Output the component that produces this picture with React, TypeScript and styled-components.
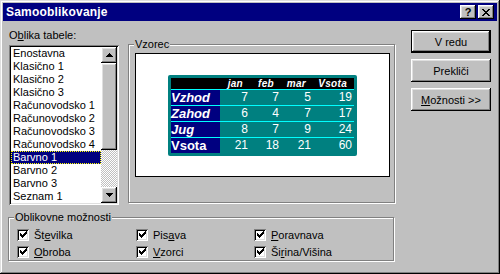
import React from "react";
import styled, { createGlobalStyle } from "styled-components";

const Global = createGlobalStyle`
  html, body { margin: 0; padding: 0; background: #c0c0c0; }
  * { box-sizing: border-box; }
`;

const raised = `
  box-shadow: inset -1px -1px #000, inset 1px 1px #fff, inset -2px -2px #808080, inset 2px 2px #dfdfdf;
`;
const sunken = `
  box-shadow: inset 1px 1px #808080, inset -1px -1px #fff, inset 2px 2px #000, inset -2px -2px #dfdfdf;
`;

const Window = styled.div`
  width: 500px;
  height: 274px;
  padding: 3px;
  background: #c0c0c0;
  box-shadow: inset -1px -1px #000, inset 1px 1px #dfdfdf, inset -2px -2px #808080, inset 2px 2px #fff;
  font-family: "Liberation Sans", Arial, sans-serif;
  font-size: 11px;
  color: #000;
  display: flex;
  flex-direction: column;
`;

const TitleBar = styled.div`
  height: 18px;
  background: #000080;
  display: flex;
  align-items: center;
  justify-content: space-between;
  padding: 0 3px 0 3px;
`;

const Title = styled.span`
  color: #fff;
  font-weight: bold;
  font-size: 12px;
  letter-spacing: 0.2px;
`;

const TitleButtons = styled.div`
  display: flex;
  gap: 2px;
`;

const TitleBtn = styled.div`
  width: 16px;
  height: 14px;
  background: #c0c0c0;
  ${raised}
  display: flex;
  align-items: center;
  justify-content: center;
  font-weight: bold;
  font-size: 11px;
  line-height: 14px;
`;

const Body = styled.div`
  flex: 1;
  padding: 8px 0 0 5px;
  display: flex;
  flex-direction: column;
`;

const TopRow = styled.div`
  display: flex;
  align-items: flex-start;
`;

const LeftCol = styled.div`
  width: 110px;
  margin-left: 1px;
  display: flex;
  flex-direction: column;
`;

const FieldLabel = styled.div`
  line-height: 13px;
  height: 16px;
`;

const Mn = styled.span`
  text-decoration: underline;
`;

const ListBox = styled.div`
  width: 110px;
  height: 160px;
  padding: 2px;
  background: #fff;
  ${sunken}
  display: flex;
`;

const ListItems = styled.div`
  flex: 1;
  display: flex;
  flex-direction: column;
`;

const ListItem = styled.div<{ $selected?: boolean }>`
  height: 13px;
  line-height: 13px;
  padding-left: 2px;
  white-space: nowrap;
  background: ${(p) => (p.$selected ? "#000080" : "transparent")};
  color: ${(p) => (p.$selected ? "#fff" : "#000")};
  outline: ${(p) => (p.$selected ? "1px dotted #ffff00" : "none")};
  outline-offset: -1px;
`;

const ScrollBar = styled.div`
  width: 16px;
  display: flex;
  flex-direction: column;
`;

const ScrollBtn = styled.div`
  width: 16px;
  height: 16px;
  background: #c0c0c0;
  ${raised}
  display: flex;
  align-items: center;
  justify-content: center;
`;

const Thumb = styled.div`
  height: 87px;
  background: #c0c0c0;
  ${raised}
`;

const Track = styled.div`
  flex: 1;
  background-color: #c0c0c0;
  background-image: conic-gradient(#fff 25%, #c0c0c0 0 50%, #fff 0 75%, #c0c0c0 0);
  background-size: 2px 2px;
`;

const Group = styled.div<{ $w: number; $h: number }>`
  position: relative;
  width: ${(p) => p.$w}px;
  height: ${(p) => p.$h}px;
  border: 1px solid #808080;
  box-shadow: 1px 1px 0 #fff, inset 1px 1px 0 #fff;
`;

const GroupLabel = styled.span`
  position: absolute;
  top: -7px;
  left: 5px;
  background: #c0c0c0;
  padding: 0 1px;
  line-height: 13px;
`;

const PreviewGroup = styled(Group)`
  margin-left: 9px;
  margin-top: 15px;
  padding: 8px 0 0 6px;
`;

const Preview = styled.div`
  width: 255px;
  height: 124px;
  background: #fff;
  border: 1px solid #000;
  display: flex;
  align-items: center;
  justify-content: center;
`;

const Sample = styled.div`
  background: #008080;
  padding: 3px;
  border-radius: 2px;
  display: grid;
  grid-template-columns: 49px 30px 31px 32px 41px;
  color: #fff;
`;

const HeadCell = styled.div`
  background: #000;
  height: 11px;
  line-height: 11px;
  font-size: 10px;
  font-weight: bold;
  font-style: italic;
  text-align: right;
  padding-right: 7px;
  letter-spacing: 0.3px;
`;

const LabelCell = styled.div<{ $italic: boolean }>`
  background: #000080;
  border-top: 1px solid #00ffff;
  height: 16px;
  line-height: 15px;
  font-size: 13px;
  font-weight: bold;
  font-style: ${(p) => (p.$italic ? "italic" : "normal")};
  white-space: nowrap;
`;

const NumCell = styled.div`
  border-top: 1px solid #00ffff;
  height: 16px;
  line-height: 15px;
  font-size: 12px;
  text-align: right;
  padding-right: 2px;
`;

const Buttons = styled.div`
  margin-left: 16px;
  margin-top: 1px;
  display: flex;
  flex-direction: column;
  gap: 6px;
`;

const Button = styled.div<{ $default?: boolean }>`
  width: 80px;
  height: 23px;
  background: #c0c0c0;
  display: flex;
  align-items: center;
  justify-content: center;
  ${(p) =>
    p.$default
      ? `box-shadow: inset 0 0 0 1px #000, inset -2px -2px #000, inset 2px 2px #fff, inset -3px -3px #808080, inset 3px 3px #dfdfdf;`
      : raised}
`;

const OptionsGroup = styled(Group)`
  margin-top: 12px;
  margin-left: 0px;
  padding: 8px 0 0 8px;
  display: grid;
  grid-template-columns: 119px 118px 118px;
  grid-auto-rows: 17px;
`;

const CheckRow = styled.div`
  display: flex;
  align-items: center;
  gap: 5px;
`;

const CheckBox = styled.div`
  width: 12px;
  height: 12px;
  background: #fff;
  ${sunken}
  display: flex;
  align-items: center;
  justify-content: center;
`;

const items = [
  "Enostavna",
  "Klasično 1",
  "Klasično 2",
  "Klasično 3",
  "Računovodsko 1",
  "Računovodsko 2",
  "Računovodsko 3",
  "Računovodsko 4",
  "Barvno 1",
  "Barvno 2",
  "Barvno 3",
  "Seznam 1",
];

const rows: { label: string; italic: boolean; nums: number[] }[] = [
  { label: "Vzhod", italic: true, nums: [7, 7, 5, 19] },
  { label: "Zahod", italic: true, nums: [6, 4, 7, 17] },
  { label: "Jug", italic: true, nums: [8, 7, 9, 24] },
  { label: "Vsota", italic: false, nums: [21, 18, 21, 60] },
];

const Check = () => (
  <svg width="7" height="7" viewBox="0 0 7 7" shapeRendering="crispEdges">
    <path
      fill="#000"
      d="M6 0h1v1h-1z M5 1h2v1h-2z M0 2h1v1h-1z M4 2h3v1h-3z M0 3h2v1h-2z M3 3h3v1h-3z M0 4h5v1h-5z M1 5h3v1h-3z M2 6h1v1h-1z"
    />
  </svg>
);

const Arrow = ({ down }: { down?: boolean }) => (
  <svg width="7" height="4" viewBox="0 0 7 4" shapeRendering="crispEdges">
    <path
      fill="#000"
      d={
        down
          ? "M0 0h7v1H0z M1 1h5v1H1z M2 2h3v1H2z M3 3h1v1H3z"
          : "M3 0h1v1H3z M2 1h3v1H2z M1 2h5v1H1z M0 3h7v1H0z"
      }
    />
  </svg>
);

const CloseX = () => (
  <svg width="8" height="7" viewBox="0 0 8 7" shapeRendering="crispEdges">
    <path
      fill="#000"
      d="M0 0h2v1H0z M6 0h2v1H6z M1 1h2v1H1z M5 1h2v1H5z M2 2h4v1H2z M3 3h2v1H3z M2 4h4v1H2z M1 5h2v1H1z M5 5h2v1H5z M0 6h2v1H0z M6 6h2v1H6z"
    />
  </svg>
);

const Opt = ({ children }: { children: React.ReactNode }) => (
  <CheckRow>
    <CheckBox>
      <Check />
    </CheckBox>
    <span>{children}</span>
  </CheckRow>
);

export default function App() {
  return (
    <>
      <Global />
      <Window>
        <TitleBar>
          <Title>Samooblikovanje</Title>
          <TitleButtons>
            <TitleBtn>?</TitleBtn>
            <TitleBtn>
              <CloseX />
            </TitleBtn>
          </TitleButtons>
        </TitleBar>
        <Body>
          <TopRow>
            <LeftCol>
              <FieldLabel>
                O<Mn>b</Mn>lika tabele:
              </FieldLabel>
              <ListBox>
                <ListItems>
                  {items.map((it) => (
                    <ListItem key={it} $selected={it === "Barvno 1"}>
                      {it}
                    </ListItem>
                  ))}
                </ListItems>
                <ScrollBar>
                  <ScrollBtn>
                    <Arrow />
                  </ScrollBtn>
                  <Thumb />
                  <Track />
                  <ScrollBtn>
                    <Arrow down />
                  </ScrollBtn>
                </ScrollBar>
              </ListBox>
            </LeftCol>
            <PreviewGroup $w={267} $h={159}>
              <GroupLabel>Vzorec</GroupLabel>
              <Preview>
                <Sample>
                  <HeadCell />
                  <HeadCell>jan</HeadCell>
                  <HeadCell>feb</HeadCell>
                  <HeadCell>mar</HeadCell>
                  <HeadCell>Vsota</HeadCell>
                  {rows.map((r) => (
                    <React.Fragment key={r.label}>
                      <LabelCell $italic={r.italic}>{r.label}</LabelCell>
                      {r.nums.map((n, i) => (
                        <NumCell key={i}>{n}</NumCell>
                      ))}
                    </React.Fragment>
                  ))}
                </Sample>
              </Preview>
            </PreviewGroup>
            <Buttons>
              <Button $default>V redu</Button>
              <Button>Prekliči</Button>
              <Button>
                <span>
                  <Mn>M</Mn>ožnosti &gt;&gt;
                </span>
              </Button>
            </Buttons>
          </TopRow>
          <OptionsGroup $w={386} $h={44}>
            <GroupLabel>Oblikovne možnosti</GroupLabel>
            <Opt>
              Št<Mn>e</Mn>vilka
            </Opt>
            <Opt>
              Pis<Mn>a</Mn>va
            </Opt>
            <Opt>
              <Mn>P</Mn>oravnava
            </Opt>
            <Opt>
              <Mn>O</Mn>broba
            </Opt>
            <Opt>
              <Mn>V</Mn>zorci
            </Opt>
            <Opt>
              Ši<Mn>r</Mn>ina/Višina
            </Opt>
          </OptionsGroup>
        </Body>
      </Window>
    </>
  );
}
